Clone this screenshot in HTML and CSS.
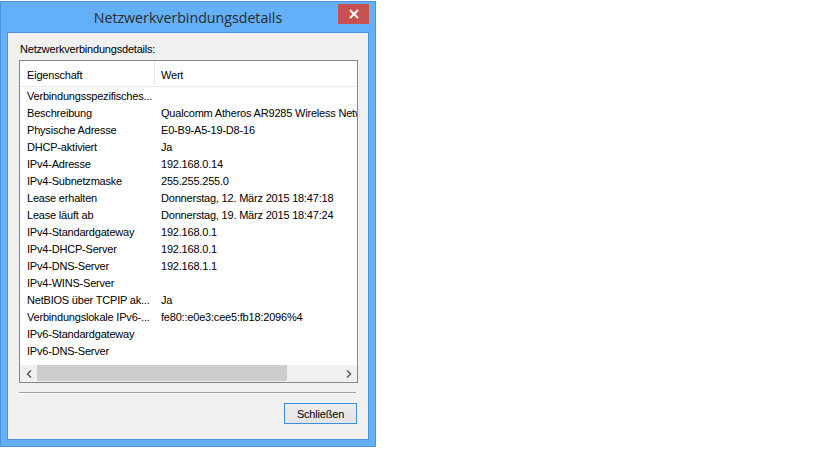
FILE: index.html
```html
<!DOCTYPE html>
<html lang="de">
<head>
<meta charset="utf-8">
<title>Netzwerkverbindungsdetails</title>
<link rel="stylesheet" href="styles.css">
</head>
<body>
<div class="window">
  <div class="titlebar">
    <span class="title">Netzwerkverbindungsdetails</span>
    <div class="close">
      <svg width="10" height="10" viewBox="0 0 10 10"><path d="M1 1 L9 9 M9 1 L1 9" stroke="#fff" stroke-width="2" fill="none"/></svg>
    </div>
  </div>
  <div class="client">
    <div class="label">Netzwerkverbindungsdetails:</div>
    <div class="list">
      <div class="header">
        <div class="col1 hcell">Eigenschaft</div>
        <div class="col2 hcell">Wert</div>
      </div>
      <div class="rows">
        <div class="row"><div class="col1">Verbindungsspezifisches...</div><div class="col2"></div></div>
        <div class="row"><div class="col1">Beschreibung</div><div class="col2">Qualcomm Atheros AR9285 Wireless Network Adapter</div></div>
        <div class="row"><div class="col1">Physische Adresse</div><div class="col2">E0-B9-A5-19-D8-16</div></div>
        <div class="row"><div class="col1">DHCP-aktiviert</div><div class="col2">Ja</div></div>
        <div class="row"><div class="col1">IPv4-Adresse</div><div class="col2">192.168.0.14</div></div>
        <div class="row"><div class="col1">IPv4-Subnetzmaske</div><div class="col2">255.255.255.0</div></div>
        <div class="row"><div class="col1">Lease erhalten</div><div class="col2">Donnerstag, 12. März 2015 18:47:18</div></div>
        <div class="row"><div class="col1">Lease läuft ab</div><div class="col2">Donnerstag, 19. März 2015 18:47:24</div></div>
        <div class="row"><div class="col1">IPv4-Standardgateway</div><div class="col2">192.168.0.1</div></div>
        <div class="row"><div class="col1">IPv4-DHCP-Server</div><div class="col2">192.168.0.1</div></div>
        <div class="row"><div class="col1">IPv4-DNS-Server</div><div class="col2">192.168.1.1</div></div>
        <div class="row"><div class="col1">IPv4-WINS-Server</div><div class="col2"></div></div>
        <div class="row"><div class="col1">NetBIOS über TCPIP ak...</div><div class="col2">Ja</div></div>
        <div class="row"><div class="col1">Verbindungslokale IPv6-...</div><div class="col2">fe80::e0e3:cee5:fb18:2096%4</div></div>
        <div class="row"><div class="col1">IPv6-Standardgateway</div><div class="col2"></div></div>
        <div class="row"><div class="col1">IPv6-DNS-Server</div><div class="col2"></div></div>
      </div>
      <div class="hscroll">
        <div class="arrow">
          <svg width="6" height="8" viewBox="0 0 6 8"><path d="M5 0.5 L1.5 4 L5 7.5" stroke="#606060" stroke-width="1.6" fill="none"/></svg>
        </div>
        <div class="track"><div class="thumb"></div></div>
        <div class="arrow">
          <svg width="6" height="8" viewBox="0 0 6 8"><path d="M1 0.5 L4.5 4 L1 7.5" stroke="#606060" stroke-width="1.6" fill="none"/></svg>
        </div>
      </div>
    </div>
    <div class="separator"></div>
    <div class="buttons">
      <button class="btn">Schließen</button>
    </div>
  </div>
</div>
</body>
</html>
```
FILE: styles.css
```css
html, body {
  margin: 0;
  padding: 0;
  background: #ffffff;
}
body {
  font-family: "Liberation Sans", Arial, sans-serif;
  font-size: 11px;
  letter-spacing: -0.2px;
  color: #000;
}
.window {
  position: relative;
  box-sizing: border-box;
  width: 376px;
  height: 446px;
  margin-top: 1px;
  border: 1px solid #4d93dc;
  background: #63aff8;
  display: flex;
  flex-direction: column;
  padding: 0 6px 6px 6px;
}
.titlebar {
  height: 30px;
  display: flex;
  justify-content: center;
  align-items: center;
}
.title {
  font-family: "Open Sans", "Liberation Sans", sans-serif;
  font-size: 14.2px;
  letter-spacing: 0;
  color: #2b2b2b;
  padding-top: 1px;
}
.close {
  position: absolute;
  top: 2px;
  right: 6px;
  width: 31px;
  height: 20px;
  background: #c75050;
  display: flex;
  align-items: center;
  justify-content: center;
}
.close svg { display: block; }
.client {
  flex: 1;
  border: 1px solid #4d93dc;
  background: #f0f0f0;
  display: flex;
  flex-direction: column;
  padding: 0 10px 0 11px;
}
.label {
  margin-top: 9px;
  margin-left: 1px;
  height: 15px;
  line-height: 15px;
  margin-bottom: 3px;
}
.list {
  height: 323px;
  box-sizing: border-box;
  border: 1px solid #828790;
  background: #fff;
  display: flex;
  flex-direction: column;
  overflow: hidden;
}
.header {
  height: 25px;
  border-bottom: 1px solid #e3ecf6;
  display: flex;
  flex-shrink: 0;
}
.hcell {
  line-height: 25px;
  padding-top: 2px;
}
.col1 {
  width: 135px;
  flex-shrink: 0;
  box-sizing: border-box;
  padding-left: 7px;
  white-space: nowrap;
  overflow: hidden;
}
.header .col1 {
  border-right: 1px solid #e5e5e5;
}
.col2 {
  flex: 1;
  padding-left: 6px;
  white-space: nowrap;
  overflow: hidden;
}
.rows {
  flex: 1;
  padding-top: 1px;
}
.row {
  display: flex;
  height: 17px;
  line-height: 17px;
}
.hscroll {
  height: 17px;
  display: flex;
  background: #f0f0f0;
  flex-shrink: 0;
}
.arrow {
  width: 17px;
  display: flex;
  align-items: center;
  justify-content: center;
}
.arrow svg { display: block; }
.track {
  flex: 1;
  display: flex;
}
.thumb {
  width: 250px;
  height: 16px;
  background: #cdcdcd;
}
.separator {
  margin-top: 9px;
  height: 1px;
  background: #a0a0a0;
  border-bottom: 1px solid #ffffff;
  margin-right: 2px;
}
.buttons {
  display: flex;
  justify-content: flex-end;
  margin-top: 9px;
}
.btn {
  width: 73px;
  height: 21px;
  box-sizing: border-box;
  border: 1px solid #3c8ee0;
  background: linear-gradient(#ececec, #e4e4e4);
  font-family: "Liberation Sans", Arial, sans-serif;
  font-size: 11px;
  letter-spacing: -0.2px;
  color: #000;
  padding: 0;
  margin-right: 1px;
}
```
